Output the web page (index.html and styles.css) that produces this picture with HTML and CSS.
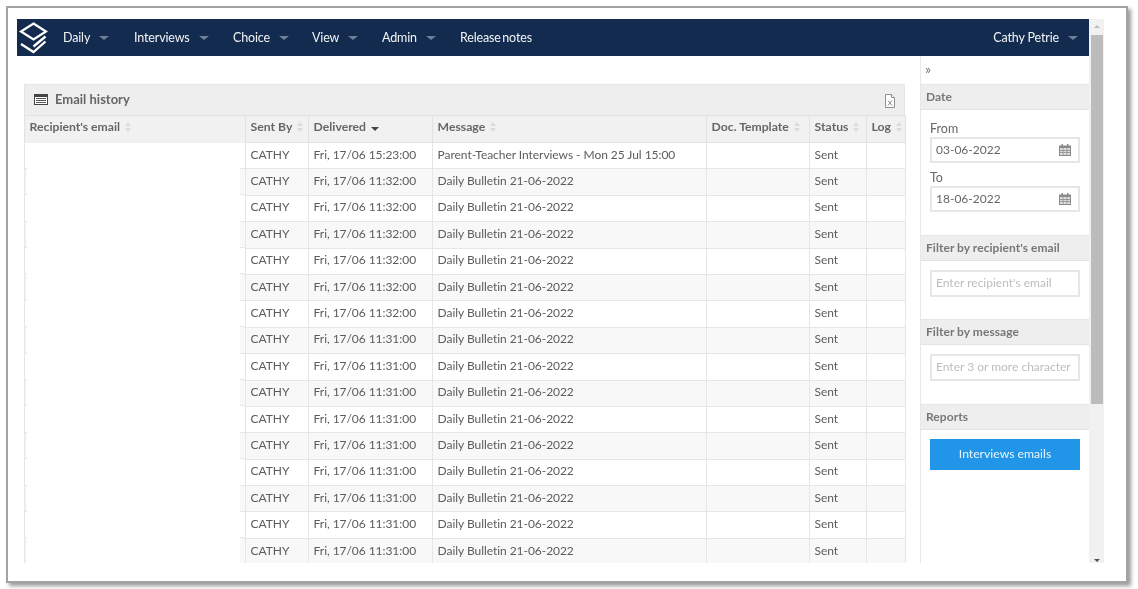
FILE: index.html
```html
<!DOCTYPE html>
<html lang="en">
<head>
<meta charset="utf-8">
<title>Email history</title>
<link rel="stylesheet" href="styles.css">
</head>
<body>
<div class="frame">
  <div class="app">
    <div class="main">
      <nav class="navbar">
        <svg class="logo" viewBox="0 0 30 32" width="30" height="32" fill="none" stroke="#fff" stroke-width="2.3">
          <path d="M15.5 1.5 L28 9.5 L15.5 17.5 L3 9.5 Z"/>
          <path d="M27.5 14.5 L15.5 24.5"/>
          <path d="M3 22 L15.5 30 L27.5 19.5"/>
        </svg>
        <a class="nav-item w-daily">Daily <i class="caret"></i></a>
        <a class="nav-item w-interviews">Interviews <i class="caret"></i></a>
        <a class="nav-item w-choice">Choice <i class="caret"></i></a>
        <a class="nav-item w-view">View <i class="caret"></i></a>
        <a class="nav-item w-admin">Admin <i class="caret"></i></a>
        <a class="nav-item nav-tight">Release notes</a>
        <a class="nav-item nav-user">Cathy Petrie <i class="caret"></i></a>
      </nav>
      <div class="body">
        <section class="content">
          <div class="panel-head">
            <span class="panel-title">
              <svg class="title-icon" viewBox="0 0 14 11" width="14" height="11"><path fill="#444" d="M0 0h14v11H0z"/><path fill="#fff" d="M1 3h12v7H1z"/><path fill="#555" d="M2 4h10v1H2zM2 6h10v1H2zM2 8h10v1H2z"/></svg>
              Email history
            </span>
            <svg class="xls-icon" viewBox="0 0 12 14" width="12" height="14" fill="#fff" stroke="#8b8f94"><path d="M1.5.5h6l3 3v10h-9z"/><path d="M7.5.5v3h3"/><path d="M4 6.5l4 5M8 6.5l-4 5"/></svg>
          </div>
          <table class="grid">
            <colgroup>
              <col class="c1"><col class="c2"><col class="c3"><col class="c4"><col class="c5"><col class="c6"><col class="c7">
            </colgroup>
            <thead>
              <tr>
                <th>Recipient's email <i class="sort"></i></th>
                <th>Sent By <i class="sort"></i></th>
                <th>Delivered <i class="sort-down"></i></th>
                <th>Message <i class="sort"></i></th>
                <th>Doc. Template <i class="sort"></i></th>
                <th>Status <i class="sort"></i></th>
                <th>Log <i class="sort"></i></th>
              </tr>
            </thead>
            <tbody>
              <tr><td class="mask"></td><td>CATHY</td><td>Fri, 17/06 15:23:00</td><td>Parent-Teacher Interviews - Mon 25 Jul 15:00</td><td></td><td>Sent</td><td></td></tr>
              <tr><td class="mask"></td><td>CATHY</td><td>Fri, 17/06 11:32:00</td><td>Daily Bulletin 21-06-2022</td><td></td><td>Sent</td><td></td></tr>
              <tr><td class="mask"></td><td>CATHY</td><td>Fri, 17/06 11:32:00</td><td>Daily Bulletin 21-06-2022</td><td></td><td>Sent</td><td></td></tr>
              <tr><td class="mask"></td><td>CATHY</td><td>Fri, 17/06 11:32:00</td><td>Daily Bulletin 21-06-2022</td><td></td><td>Sent</td><td></td></tr>
              <tr><td class="mask"></td><td>CATHY</td><td>Fri, 17/06 11:32:00</td><td>Daily Bulletin 21-06-2022</td><td></td><td>Sent</td><td></td></tr>
              <tr><td class="mask"></td><td>CATHY</td><td>Fri, 17/06 11:32:00</td><td>Daily Bulletin 21-06-2022</td><td></td><td>Sent</td><td></td></tr>
              <tr><td class="mask"></td><td>CATHY</td><td>Fri, 17/06 11:32:00</td><td>Daily Bulletin 21-06-2022</td><td></td><td>Sent</td><td></td></tr>
              <tr><td class="mask"></td><td>CATHY</td><td>Fri, 17/06 11:31:00</td><td>Daily Bulletin 21-06-2022</td><td></td><td>Sent</td><td></td></tr>
              <tr><td class="mask"></td><td>CATHY</td><td>Fri, 17/06 11:31:00</td><td>Daily Bulletin 21-06-2022</td><td></td><td>Sent</td><td></td></tr>
              <tr><td class="mask"></td><td>CATHY</td><td>Fri, 17/06 11:31:00</td><td>Daily Bulletin 21-06-2022</td><td></td><td>Sent</td><td></td></tr>
              <tr><td class="mask"></td><td>CATHY</td><td>Fri, 17/06 11:31:00</td><td>Daily Bulletin 21-06-2022</td><td></td><td>Sent</td><td></td></tr>
              <tr><td class="mask"></td><td>CATHY</td><td>Fri, 17/06 11:31:00</td><td>Daily Bulletin 21-06-2022</td><td></td><td>Sent</td><td></td></tr>
              <tr><td class="mask"></td><td>CATHY</td><td>Fri, 17/06 11:31:00</td><td>Daily Bulletin 21-06-2022</td><td></td><td>Sent</td><td></td></tr>
              <tr><td class="mask"></td><td>CATHY</td><td>Fri, 17/06 11:31:00</td><td>Daily Bulletin 21-06-2022</td><td></td><td>Sent</td><td></td></tr>
              <tr><td class="mask"></td><td>CATHY</td><td>Fri, 17/06 11:31:00</td><td>Daily Bulletin 21-06-2022</td><td></td><td>Sent</td><td></td></tr>
              <tr><td class="mask"></td><td>CATHY</td><td>Fri, 17/06 11:31:00</td><td>Daily Bulletin 21-06-2022</td><td></td><td>Sent</td><td></td></tr>
            </tbody>
          </table>
        </section>
        <aside class="side">
          <div class="collapse">»</div>
          <h3 class="side-head">Date</h3>
          <div class="side-block date-block">
            <label class="field-label">From</label>
            <div class="input date-input">03-06-2022
              <svg class="cal" viewBox="0 0 12 12" width="12" height="12"><path fill="#8a8a8a" d="M0 1.5h12V12H0z"/><path fill="#ddd" d="M1 4h10v7H1z"/><path fill="#8a8a8a" d="M2.5 0h1.5v3H2.5zM8 0h1.5v3H8zM1 6h10v.7H1zM1 8.3h10V9H1zM3.7 4h.7v7h-.7zM7.6 4h.7v7h-.7z"/></svg>
            </div>
            <label class="field-label to-label">To</label>
            <div class="input date-input">18-06-2022
              <svg class="cal" viewBox="0 0 12 12" width="12" height="12"><path fill="#8a8a8a" d="M0 1.5h12V12H0z"/><path fill="#ddd" d="M1 4h10v7H1z"/><path fill="#8a8a8a" d="M2.5 0h1.5v3H2.5zM8 0h1.5v3H8zM1 6h10v.7H1zM1 8.3h10V9H1zM3.7 4h.7v7h-.7zM7.6 4h.7v7h-.7z"/></svg>
            </div>
          </div>
          <h3 class="side-head">Filter by recipient's email</h3>
          <div class="side-block filter-block">
            <div class="input placeholder">Enter recipient's email</div>
          </div>
          <h3 class="side-head">Filter by message</h3>
          <div class="side-block filter-block filter-last">
            <div class="input placeholder">Enter 3 or more character</div>
          </div>
          <h3 class="side-head">Reports</h3>
          <div class="side-block">
            <button class="btn">Interviews emails</button>
          </div>
        </aside>
      </div>
    </div>
    <div class="scrollbar">
      <i class="arrow-up"></i>
      <div class="thumb"></div>
      <i class="arrow-down"></i>
    </div>
  </div>
</div>
</body>
</html>
```
FILE: styles.css
```css
* { box-sizing: border-box; }
html, body { margin: 0; height: 100%; background: #fff; overflow: hidden; }
body { font-family: Lato, "Open Sans", sans-serif; font-size: 12px; color: #555; }

.frame {
  width: 1122px;
  height: 577px;
  margin: 6px 0 0 6px;
  border: 2px solid #a3a3a3;
  box-shadow: 3px 3px 4px rgba(0,0,0,.4);
  padding: 11px 0 0 9px;
  background: #fff;
}
.app { display: flex; width: 1087px; height: 544px; filter: blur(.35px); }
.main { width: 1072px; height: 544px; display: flex; flex-direction: column; overflow: hidden; }

.navbar {
  height: 37px;
  flex: none;
  background: #132b4f;
  display: flex;
  align-items: center;
  color: #f1f3f6;
  font-size: 12.5px;
  letter-spacing: -.15px;
  padding-left: 1px;
}
.logo { margin-right: 15px; flex: none; }
.nav-item { display: flex; align-items: center; white-space: nowrap; }
.nav-tight { word-spacing: -1.5px; }
.w-daily { width: 71px; }
.w-interviews { width: 99px; }
.w-choice { width: 79px; }
.w-view { width: 70px; }
.w-admin { width: 78px; }
.nav-user { margin-left: auto; margin-right: 11px; }
.caret {
  display: inline-block;
  width: 0; height: 0;
  margin-left: 9px;
  border-left: 5px solid transparent;
  border-right: 5px solid transparent;
  border-top: 4px solid #6f7f96;
}

.body { flex: 1; display: flex; min-height: 0; }
.content { width: 903px; padding: 28px 0 0 7px; overflow: hidden; flex: none; }
.panel-head {
  width: 881px;
  height: 31px;
  background: #eee;
  border: 1px solid #e6e6e6;
  border-bottom: 0;
  display: flex;
  align-items: center;
  justify-content: space-between;
  padding: 0 8px 2px 9px;
}
.panel-title { display: flex; align-items: center; gap: 7px; font-weight: 700; color: #666; font-size: 13px; }
.title-icon { flex: none; }
.xls-icon { flex: none; margin-top: 3px; }

.grid { width: 881px; border-collapse: collapse; table-layout: fixed; }
.c1 { width: 221px; }
.c2 { width: 63px; }
.c3 { width: 124px; }
.c4 { width: 274px; }
.c5 { width: 103px; }
.c6 { width: 57px; }
.c7 { width: 39px; }
.grid th {
  height: 27px;
  background: #f1f1f1;
  border: 1px solid #e2e2e2;
  text-align: left;
  font-weight: 700;
  color: #666;
  font-size: 12.2px;
  padding: 0 4px 5px 4.6px;
  white-space: nowrap;
  overflow: hidden;
}
.grid td {
  height: 26.4px;
  border: 1px solid #e6e6e6;
  padding: 0 4px 3px 4.6px;
  white-space: nowrap;
  overflow: hidden;
  color: #5c5c5c;
  letter-spacing: -.05px;
}
.grid tbody tr:nth-child(even) td { background: #f8f8f8; }
.grid tbody tr td.mask {
  border-top: hidden;
  border-bottom: hidden;
  background:
    linear-gradient(#fff, #fff) no-repeat 2px 0 / 213px 100%,
    linear-gradient(#e6e6e6, #e6e6e6) no-repeat 0 100% / 100% 1px,
    #fff;
}
.grid tbody tr:nth-child(even) td.mask {
  background:
    linear-gradient(#fff, #fff) no-repeat 2px 0 / 213px 100%,
    linear-gradient(#e6e6e6, #e6e6e6) no-repeat 0 100% / 100% 1px,
    #f8f8f8;
}
.sort, .sort-down { display: inline-block; position: relative; width: 8px; height: 10px; margin-left: 2px; vertical-align: -1px; }
.sort::before, .sort::after {
  content: "";
  position: absolute;
  left: 0;
  border-left: 3px solid transparent;
  border-right: 3px solid transparent;
}
.sort::before { top: 0; border-bottom: 4px solid #dcdcdc; }
.sort::after { bottom: 0; border-top: 4px solid #dcdcdc; }
.sort-down::after {
  content: "";
  position: absolute;
  left: 0;
  bottom: 1px;
  border-left: 4px solid transparent;
  border-right: 4px solid transparent;
  border-top: 4px solid #444;
}

.side { flex: 1; border-left: 1px solid #e8e8e8; min-width: 0; }
.collapse { height: 28px; padding: 5px 0 0 4px; font-size: 14px; line-height: 16px; color: #777; }
.side-head {
  margin: 0;
  height: 26px;
  background: #eee;
  border-top: 1px solid #e6e6e6;
  border-bottom: 1px solid #e2e2e2;
  font-size: 12px;
  letter-spacing: .05px;
  font-weight: 700;
  color: #777;
  line-height: 23px;
  padding-left: 5px;
}
.side-block { padding: 9px 9px 0 9px; }
.date-block { height: 125px; padding-top: 12px; }
.filter-block { height: 58px; }
.filter-last { height: 59px; }
.field-label { display: block; font-size: 12.5px; line-height: 13px; color: #666; }
.to-label { margin-top: 8px; }
.input {
  height: 27px;
  width: 150px;
  border: 2px solid #e6e6e6;
  padding: 0 4px;
  line-height: 21px;
  font-size: 12px;
  color: #666;
  white-space: nowrap;
  overflow: hidden;
  background: #fff;
}
.date-input { display: flex; align-items: center; justify-content: space-between; height: 26px; margin-top: 2px; padding-bottom: 1px; }
.cal { flex: none; margin-right: 3px; }
.placeholder { color: #bdbdbd; }
.btn {
  display: block;
  width: 150px;
  height: 31px;
  border: 0;
  padding: 0 0 2px;
  background: #2196e8;
  color: #e8f4fd;
  font: 12.2px Lato, sans-serif;
}

.scrollbar { width: 15px; background: #f1f1f1; display: flex; flex-direction: column; align-items: center; position: relative; }
.arrow-up, .arrow-down {
  flex: none;
  width: 0;
  height: 0;
  border-left: 3px solid transparent;
  border-right: 3px solid transparent;
}
.arrow-up { border-bottom: 3px solid #bbb; margin: 6px 0 7px; }
.arrow-down { border-top: 3px solid #505050; margin-top: auto; margin-bottom: 1px; }
.thumb { width: 12px; height: 369px; background: #bcbcbc; }
```
